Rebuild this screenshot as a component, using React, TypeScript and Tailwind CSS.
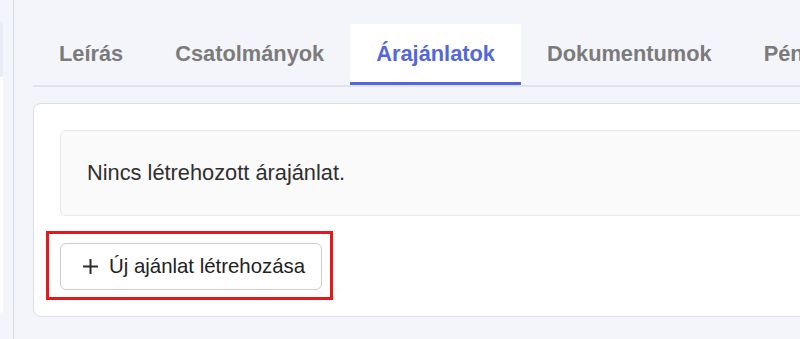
const tabs = ["Leírás", "Csatolmányok", "Árajánlatok", "Dokumentumok", "Pénzügyek"];

function PlusIcon() {
  return (
    <svg width="17" height="17" viewBox="0 0 17 17" fill="none">
      <path d="M8.5 1v15M1 8.5h15" stroke="#2b2b2b" strokeWidth="2" />
    </svg>
  );
}

export default function App() {
  const active = "Árajánlatok";

  return (
    <div
      className="flex h-[339px] w-[800px] overflow-hidden bg-[#f4f5fa]"
      style={{ fontFamily: '"Liberation Sans", Arial, sans-serif' }}
    >
      {/* Sidebar edge */}
      <div className="flex w-[14px] flex-none border-r border-[#d9dce4] pt-[22px] pb-[26px]">
        <div className="flex w-[3px] flex-col overflow-hidden rounded-r-md bg-white">
          <div className="h-[55px] bg-[#e9edf8]" />
        </div>
      </div>

      {/* Main */}
      <div className="flex w-[820px] flex-none flex-col pl-[19px] pt-[24px]">
        {/* Tabs */}
        <div className="flex border-b-2 border-[#e1e3ea]">
          {tabs.map((t) => (
            <div
              key={t}
              className={
                t === active
                  ? "flex h-[61px] items-center border-b-[3px] border-[#5266de] bg-white px-[26px] pt-[3px] text-[21.8px] font-bold text-[#5266de]"
                  : "flex h-[61px] items-center px-[26px] text-[21.8px] font-bold text-[#7b7b7b]"
              }
            >
              {t}
            </div>
          ))}
        </div>

        {/* Card */}
        <div className="mt-[16px] rounded-lg border border-[#dcdfe8] bg-white p-[26px]">
          <div className="flex h-[86px] items-center rounded-md border border-[#e9e9ec] bg-[#fafafa] pl-[26px] text-[21.8px] text-[#2f2f2f]">
            Nincs létrehozott árajánlat.
          </div>

          <div className="relative mt-[27px] inline-flex">
            <button className="flex h-[47px] items-center gap-[10px] rounded-md border border-[#cccccc] bg-white pl-[21px] pr-[16px] text-[20.4px] text-[#222222]">
              <PlusIcon />
              <span>Új ajánlat létrehozása</span>
            </button>
            <div className="pointer-events-none absolute top-[-12px] right-[-11px] bottom-[-10px] left-[-14px] border-[3px] border-[#e3191c]" />
          </div>
        </div>
      </div>
    </div>
  );
}
